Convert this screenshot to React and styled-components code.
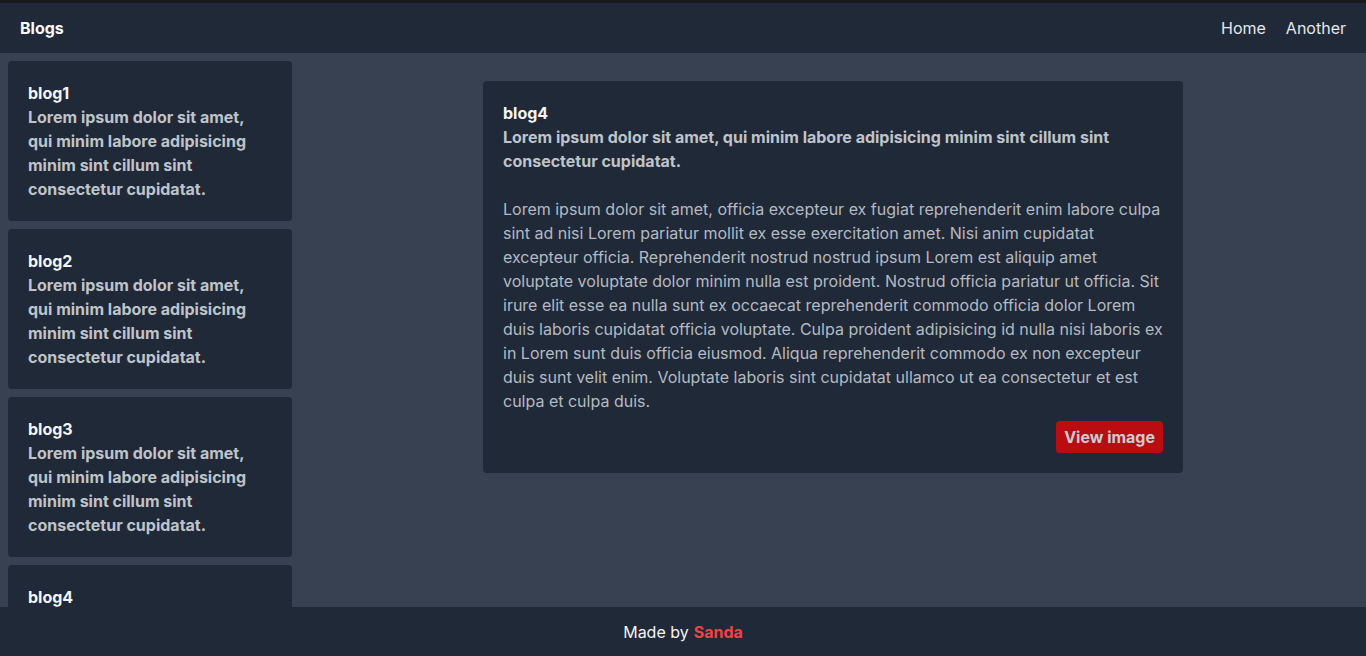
import React from "react";
import styled, { createGlobalStyle } from "styled-components";

const lorem =
  "Lorem ipsum dolor sit amet, qui minim labore adipisicing minim sint cillum sint consectetur cupidatat.";

const body =
  "Lorem ipsum dolor sit amet, officia excepteur ex fugiat reprehenderit enim labore culpa sint ad nisi Lorem pariatur mollit ex esse exercitation amet. Nisi anim cupidatat excepteur officia. Reprehenderit nostrud nostrud ipsum Lorem est aliquip amet voluptate voluptate dolor minim nulla est proident. Nostrud officia pariatur ut officia. Sit irure elit esse ea nulla sunt ex occaecat reprehenderit commodo officia dolor Lorem duis laboris cupidatat officia voluptate. Culpa proident adipisicing id nulla nisi laboris ex in Lorem sunt duis officia eiusmod. Aliqua reprehenderit commodo ex non excepteur duis sunt velit enim. Voluptate laboris sint cupidatat ullamco ut ea consectetur et est culpa et culpa duis.";

const blogs = ["blog1", "blog2", "blog3", "blog4"];

const App = () => {
  return (
    <Page>
      <GlobalStyle />
      <Header>
        <Brand>Blogs</Brand>
        <Nav>
          <NavLink>Home</NavLink>
          <NavLink>Another</NavLink>
        </Nav>
      </Header>

      <Main>
        <Sidebar>
          {blogs.map((b) => (
            <SideCard key={b}>
              <Title>{b}</Title>
              <Summary>{lorem}</Summary>
            </SideCard>
          ))}
        </Sidebar>

        <Content>
          <Article>
            <Title>blog4</Title>
            <Summary>{lorem}</Summary>
            <Body>{body}</Body>
            <Actions>
              <RedBtn type="button">View image</RedBtn>
            </Actions>
          </Article>
        </Content>
      </Main>

      <Footer>
        Made by <Author>Sanda</Author>
      </Footer>
    </Page>
  );
};

export default App;

const GlobalStyle = createGlobalStyle`
  * { box-sizing: border-box; }
  html, body {
    margin: 0;
    padding: 0;
    background: #374151;
    font-family: Inter, "Noto Sans", sans-serif;
  }
`;

const Page = styled.div`
  height: 656px;
  display: flex;
  flex-direction: column;
  overflow: hidden;
`;

const Header = styled.header`
  height: 53px;
  flex-shrink: 0;
  border-top: 3px solid #17191e;
  background: #1f2937;
  display: flex;
  align-items: center;
  justify-content: space-between;
  padding: 0 20px;
`;

const Brand = styled.div`
  font-size: 16px;
  font-weight: 700;
  color: #f9fafb;
`;

const Nav = styled.nav`
  display: flex;
  gap: 20px;
`;

const NavLink = styled.a`
  font-size: 16px;
  color: #e5e7eb;
  cursor: pointer;
`;

const Main = styled.main`
  flex: 1;
  min-height: 0;
  display: flex;
  background: #374151;
`;

const Sidebar = styled.aside`
  width: 300px;
  flex-shrink: 0;
  padding: 8px;
  display: flex;
  flex-direction: column;
  gap: 8px;
  overflow: hidden;
`;

const SideCard = styled.div`
  flex-shrink: 0;
  height: 160px;
  background: #1f2937;
  border-radius: 4px;
  padding: 20px;
`;

const Title = styled.div`
  font-size: 16px;
  line-height: 24px;
  font-weight: 700;
  color: #f3f4f6;
`;

const Summary = styled.div`
  font-size: 16px;
  line-height: 24px;
  font-weight: 700;
  color: #bfc3ca;
`;

const Content = styled.section`
  flex: 1;
  display: flex;
  justify-content: center;
  align-items: flex-start;
  padding-top: 28px;
`;

const Article = styled.article`
  width: 700px;
  background: #1f2937;
  border-radius: 4px;
  padding: 20px;
`;

const Body = styled.p`
  margin: 24px 0 0;
  font-size: 16px;
  line-height: 24px;
  color: #b5bac2;
`;

const Actions = styled.div`
  display: flex;
  justify-content: flex-end;
  margin-top: 8px;
`;

const RedBtn = styled.button`
  height: 32px;
  padding: 0 8px;
  border: none;
  border-radius: 4px;
  background: #b90d12;
  color: #c9cdd3;
  font-family: Inter, "Noto Sans", sans-serif;
  font-size: 16px;
  font-weight: 700;
  cursor: pointer;
`;

const Footer = styled.footer`
  height: 49px;
  flex-shrink: 0;
  background: #1f2937;
  display: flex;
  align-items: center;
  justify-content: center;
  gap: 5px;
  font-size: 16px;
  color: #f3f4f6;
`;

const Author = styled.span`
  color: #ef4444;
  font-weight: 700;
`;
